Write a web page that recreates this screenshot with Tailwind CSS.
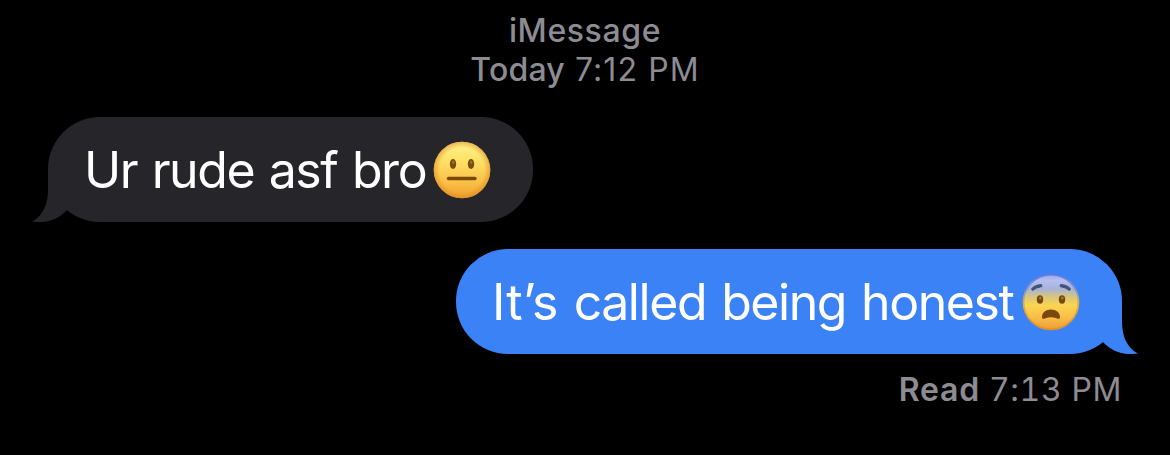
<!DOCTYPE html>
<html lang="en">
<head>
<meta charset="utf-8">
<title>Messages</title>
<script src="https://cdn.jsdelivr.net/npm/@tailwindcss/browser@4"></script>
</head>
<body class="bg-black font-['Inter',sans-serif] overflow-hidden">
<main class="flex h-[455px] w-[1170px] flex-col">
  <header class="flex flex-col items-center pt-[11px] text-[32px] leading-[39px] text-[#8d8c92]">
    <p class="font-medium tracking-[0.6px]">iMessage</p>
    <p class="flex gap-[10px] whitespace-nowrap"><span class="font-medium tracking-[0.2px]">Today</span><span class="tracking-[1.1px]">7:12 PM</span></p>
  </header>

  <section class="relative mt-[28px] ml-[48px] flex h-[105px] w-[485px] items-center rounded-[52px] bg-[#26252a] pl-[36px]">
    <svg class="absolute -left-4 top-[53px] h-[52px] w-[68px]" viewBox="0 0 68 52" fill="#26252a"><path d="M16 0V20C16 34 11 46 0 51.500C14 53.500 26 50 35 40L68 20V0Z"/></svg>
    <span class="relative w-[349px] whitespace-nowrap text-[50px] leading-[60px] tracking-[-1.45px] [word-spacing:2px] text-white">Ur rude asf bro</span>
    <svg class="relative size-[58px]" viewBox="0 0 58 58">
      <defs>
        <linearGradient id="a" x1="0" y1="0" x2="0" y2="1"><stop offset="0" stop-color="#fff38c"/><stop offset=".3" stop-color="#ffe36a"/><stop offset=".7" stop-color="#fbc148"/><stop offset="1" stop-color="#f0a02f"/></linearGradient>
        <radialGradient id="b"><stop offset=".78" stop-color="#e08a1c" stop-opacity="0"/><stop offset="1" stop-color="#d9851c" stop-opacity=".55"/></radialGradient>
      </defs>
      <circle cx="29" cy="29" r="28.3" fill="url(#a)"/><circle cx="29" cy="29" r="28.3" fill="url(#b)"/>
      <g fill="#7a4d0c"><ellipse cx="20" cy="23" rx="3.2" ry="5"/><ellipse cx="38" cy="23" rx="3.2" ry="5"/></g>
      <g fill="#9b712b"><ellipse cx="20.3" cy="21.3" rx="1.3" ry="1.7"/><ellipse cx="38.3" cy="21.3" rx="1.3" ry="1.7"/></g>
      <path d="M15.500 37.500H42" stroke="#7a4a0a" stroke-width="3.400" stroke-linecap="round"/>
    </svg>
  </section>

  <section class="relative mt-[27px] mr-[48px] flex h-[105px] w-[666px] items-center self-end rounded-[52px] bg-[#3c82f7] pl-[36px]">
    <svg class="absolute -right-4 top-[53px] h-[52px] w-[68px] -scale-x-100" viewBox="0 0 68 52" fill="#3c82f7"><path d="M16 0V20C16 34 11 46 0 51.500C14 53.500 26 50 35 40L68 20V0Z"/></svg>
    <span class="relative w-[530px] whitespace-nowrap text-[50px] leading-[60px] tracking-[-1.45px] [word-spacing:2.5px] text-white"><span class="tracking-[0.1px]">It’s</span> called being honest</span>
    <svg class="relative size-[58px]" viewBox="0 0 58 58">
      <defs>
        <linearGradient id="c" x1="0" y1="0" x2="0" y2="1"><stop offset="0" stop-color="#8fa5f0"/><stop offset=".12" stop-color="#b4bff0"/><stop offset=".27" stop-color="#a9b2d8"/><stop offset=".42" stop-color="#d9c877"/><stop offset=".56" stop-color="#fbd452"/><stop offset=".78" stop-color="#f9bd49"/><stop offset="1" stop-color="#eb9a32"/></linearGradient>
        <linearGradient id="d" x1="0" y1="0" x2="0" y2="1"><stop offset=".05" stop-color="#5268dc" stop-opacity=".75"/><stop offset=".35" stop-color="#7583a8" stop-opacity=".5"/><stop offset=".55" stop-color="#cf851d" stop-opacity=".5"/></linearGradient>
      </defs>
      <circle cx="29" cy="29" r="28.3" fill="url(#c)"/><circle cx="29" cy="29" r="27.5" fill="none" stroke="url(#d)" stroke-width="1.8"/>
      <path d="M9.500 16Q12 12 19.500 11.500L20 13.500Q14 14.500 10.500 17.500ZM48.500 16Q46 12 38.500 11.500L38 13.500Q44 14.500 47.500 17.500Z" fill="#405477" stroke="#405477" stroke-width="1" stroke-linejoin="round"/>
      <g fill="#75480c"><ellipse cx="18" cy="26.500" rx="3.200" ry="4.200"/><ellipse cx="40" cy="26.500" rx="3.200" ry="4.200"/></g>
      <g fill="#a67a34"><ellipse cx="18.300" cy="25" rx="1.300" ry="1.500"/><ellipse cx="40.300" cy="25" rx="1.300" ry="1.500"/></g>
      <path d="M20 44C20 39.500 24 36.500 29 36.500S38 39.500 38 44C38 46.500 36 46 34.500 45.300Q29 43 23.500 45.300C22 46 20 46.500 20 44Z" fill="#79480f"/>
    </svg>
  </section>

  <footer class="mt-[16px] mr-[48px] flex justify-end gap-[9px] whitespace-nowrap text-[32px] leading-[39px] text-[#8d8c92]">
    <span class="font-semibold tracking-[0.8px]">Read</span><span class="tabular-nums tracking-[0.6px]">7:13 PM</span>
  </footer>
</main>
</body>
</html>
